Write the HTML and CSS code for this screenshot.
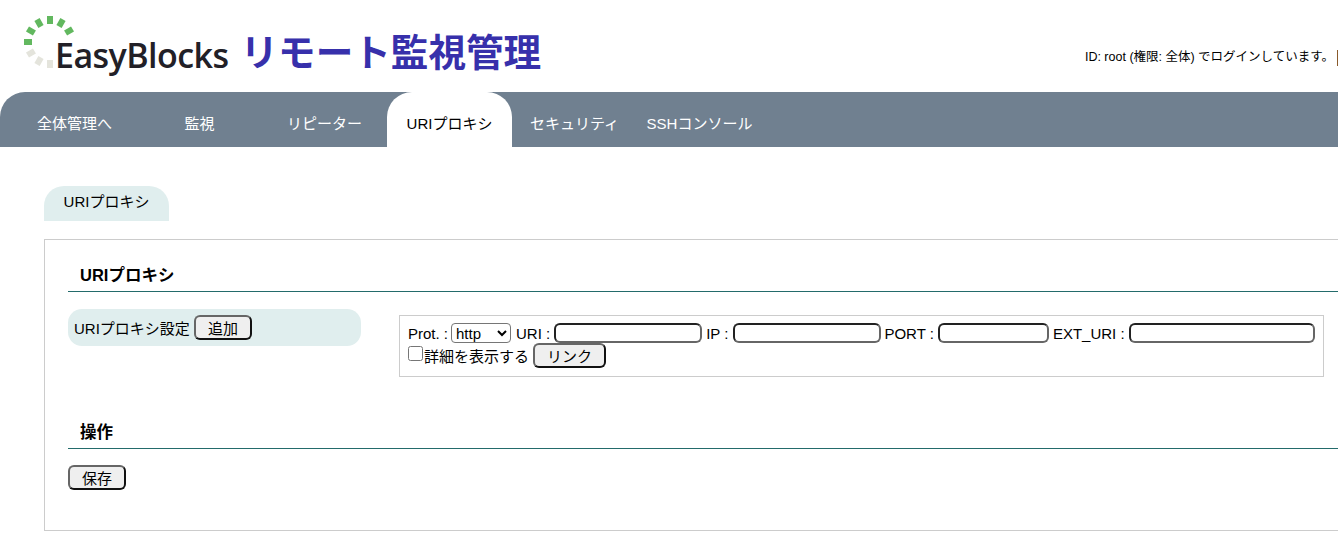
FILE: index.html
```html
<!DOCTYPE html>
<html>

<head>
    <meta charset="UTF-8">
    <meta name="viewport" content="width=device-width, initial-scale=1.0">
    <title>リモート監視管理</title>
    <link rel="stylesheet" href="styles.css">
</head>

<body>
    <div class="header">
        <div class="logo">
            <svg class="logo-mark" width="52" height="52" viewBox="0 0 52 52">
                <g fill="#62b85f">
                    <rect x="23" y="0" width="6" height="8" transform="rotate(-90 26 26)"/>
                    <rect x="23" y="0" width="6" height="8" transform="rotate(-60 26 26)"/>
                    <rect x="23" y="0" width="6" height="8" transform="rotate(-30 26 26)"/>
                    <rect x="23" y="0" width="6" height="8"/>
                    <rect x="23" y="0" width="6" height="8" transform="rotate(30 26 26)"/>
                    <rect x="23" y="0" width="6" height="8" transform="rotate(60 26 26)"/>
                </g>
                <g fill="#e4e4dc">
                    <rect x="23" y="0" width="6" height="8" transform="rotate(-120 26 26)"/>
                    <rect x="23" y="0" width="6" height="8" transform="rotate(-150 26 26)"/>
                    <rect x="23" y="0" width="6" height="8" transform="rotate(180 26 26)"/>
                </g>
            </svg>
            <span class="logo-text">EasyBlocks</span>
        </div>
        <div class="app-title">リモート監視管理</div>
        <div class="login-info">ID: root (権限: 全体) でログインしています。</div>
    </div>

    <div class="nav">
        <a class="nav-item">全体管理へ</a>
        <a class="nav-item">監視</a>
        <a class="nav-item">リピーター</a>
        <a class="nav-item active">URIプロキシ</a>
        <a class="nav-item">セキュリティ</a>
        <a class="nav-item">SSHコンソール</a>
    </div>

    <div class="main">
        <div class="sub-tab">URIプロキシ</div>
        <div class="panel">
            <h3 class="section-title">URIプロキシ</h3>
            <div class="setting-row">
                <div class="setting-label">URIプロキシ設定 <button class="btn">追加</button></div>
                <div class="setting-box">
                    <div class="box-line">
                        Prot. :
                        <select class="prot">
                            <option>http</option>
                            <option>https</option>
                        </select>
                        <span>URI :</span>
                        <input type="text" class="field w-uri">
                        <span>IP :</span>
                        <input type="text" class="field w-uri ip">
                        <span>PORT :</span>
                        <input type="text" class="field w-port">
                        <span>EXT_URI :</span>
                        <input type="text" class="field w-ext">
                    </div>
                    <div class="box-line second">
                        <input type="checkbox" class="check">
                        <span>詳細を表示する</span>
                        <button class="btn">リンク</button>
                    </div>
                </div>
            </div>
            <h3 class="section-title second">操作</h3>
            <button class="btn save">保存</button>
        </div>
    </div>
</body>

</html>
```

FILE: styles.css
```css
html {
    overflow: hidden;
}

body {
    margin: 0;
    height: 536px;
    overflow: hidden;
    background-color: white;
    color: black;
    font-family: "Liberation Sans", "Noto Sans CJK JP", sans-serif;
    font-size: 15px;
}

.header {
    display: flex;
    height: 92px;
}

.logo {
    position: relative;
    margin-left: 55px;
    padding-top: 33px;
}

.logo-mark {
    position: absolute;
    left: -31px;
    top: 16px;
}

.logo-text {
    font-family: "Open Sans", sans-serif;
    font-size: 34px;
    font-weight: 600;
    line-height: 44px;
    letter-spacing: -0.55px;
    color: #222027;
}

.app-title {
    margin-left: 12px;
    padding-top: 23px;
    font-family: "Noto Sans CJK JP", sans-serif;
    font-size: 37.6px;
    font-weight: 700;
    line-height: 54px;
    color: #3730ab;
    white-space: nowrap;
}

.login-info {
    margin-left: auto;
    margin-top: 50px;
    height: 16px;
    padding-right: 3px;
    border-right: 1px solid #8a5a2b;
    font-size: 12.5px;
    line-height: 15px;
    white-space: nowrap;
}

.nav {
    display: flex;
    height: 55px;
    padding-left: 12px;
    background-color: #708090;
    border-top-left-radius: 25px;
}

.nav-item {
    width: 125px;
    padding-top: 22px;
    color: white;
    line-height: 20px;
    text-align: center;
    white-space: nowrap;
}

.nav-item.active {
    background-color: white;
    color: black;
    border-radius: 25px 25px 0 0;
}

.main {
    padding: 39px 0 0 44px;
}

.sub-tab {
    width: 125px;
    height: 35px;
    line-height: 31px;
    text-align: center;
    background-color: #e0eeee;
    border-radius: 20px 20px 0 0;
}

.panel {
    margin-top: 18px;
    padding: 0 0 40px 23px;
    border: 1px solid #ccc;
    border-right: none;
}

.section-title {
    margin: 25px 0 0;
    padding: 0 12px 6px;
    font-size: 16.5px;
    line-height: 20px;
    border-bottom: 1px solid #236b6b;
}

.section-title.second {
    margin-top: 44px;
    padding-top: 1px;
}

.setting-row {
    display: flex;
    align-items: flex-start;
    gap: 38px;
    margin-top: 17px;
}

.setting-label {
    box-sizing: border-box;
    width: 293px;
    height: 37px;
    padding: 6px;
    background-color: #e0eeee;
    border-radius: 14px;
    white-space: nowrap;
}

.setting-box {
    box-sizing: border-box;
    width: 925px;
    height: 62px;
    margin-top: 6px;
    padding: 7px 8px 0;
    border: 1px solid #ccc;
    white-space: nowrap;
}

.box-line {
    display: flex;
    align-items: center;
    gap: 4px;
    height: 20px;
}

.box-line.second {
    height: 24px;
}

.btn {
    box-sizing: border-box;
    height: 25px;
    padding: 0 12px;
    background-color: #efefef;
    border: 2px solid;
    border-color: #666 #111 #111 #666;
    border-radius: 6px;
    color: black;
    font-family: inherit;
    font-size: 15px;
}

.save {
    display: block;
    margin-top: 16px;
}

.field {
    box-sizing: border-box;
    height: 20px;
    padding: 0 4px;
    background-color: white;
    border: 2px solid;
    border-color: #222 #666 #666 #222;
    border-radius: 6px;
}

.field.ip {
    margin: 0 -1px 0 1px;
}

.w-uri {
    width: 148px;
}

.w-port {
    width: 111px;
}

.w-ext {
    width: 186px;
}

.prot {
    width: 60px;
    height: 20px;
    margin: 0 1px 0 -1px;
    font-family: inherit;
    font-size: 15px;
    border-radius: 4px;
    background-color: white;
}

.check {
    width: 15px;
    height: 15px;
    margin: 0 -3px 4px 0;
}
```
